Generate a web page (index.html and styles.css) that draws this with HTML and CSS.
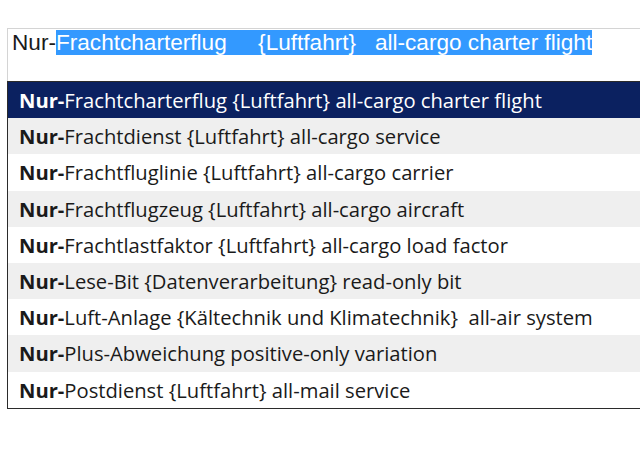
FILE: index.html
```html
<!DOCTYPE html>
<html lang="de">
<head>
<meta charset="utf-8">
<title>Nur-Frachtcharterflug</title>
<link rel="stylesheet" href="styles.css">
</head>
<body>
<div class="page">
  <div class="search"><span class="typed">Nur-</span><span class="sel">Frachtcharterflug     {Luftfahrt}   all-cargo charter flight</span></div>
  <ul class="list">
    <li class="item active"><b>Nur-</b>Frachtcharterflug {Luftfahrt} all-cargo charter flight</li>
    <li class="item alt"><b>Nur-</b>Frachtdienst {Luftfahrt} all-cargo service</li>
    <li class="item"><b>Nur-</b>Frachtfluglinie {Luftfahrt} all-cargo carrier</li>
    <li class="item alt"><b>Nur-</b>Frachtflugzeug {Luftfahrt} all-cargo aircraft</li>
    <li class="item"><b>Nur-</b>Frachtlastfaktor {Luftfahrt} all-cargo load factor</li>
    <li class="item alt"><b>Nur-</b>Lese-Bit {Datenverarbeitung} read-only bit</li>
    <li class="item"><b>Nur-</b>Luft-Anlage {Kältechnik und Klimatechnik}  all-air system</li>
    <li class="item alt"><b>Nur-</b>Plus-Abweichung positive-only variation</li>
    <li class="item"><b>Nur-</b>Postdienst {Luftfahrt} all-mail service</li>
  </ul>
</div>
</body>
</html>
```

FILE: styles.css
```css
html, body {
  margin: 0;
  padding: 0;
  background: #ffffff;
  overflow: hidden;
}
.page {
  width: 640px;
  height: 451px;
  padding-top: 28px;
  padding-left: 7px;
  box-sizing: border-box;
  overflow: hidden;
}
.search {
  height: 53px;
  border-top: 1px solid #d4d4d4;
  border-left: 1px solid #d4d4d4;
  box-sizing: border-box;
  padding: 1px 0 0 4px;
  font-family: "Liberation Sans", Arial, sans-serif;
  font-size: 22.6px;
  line-height: 25px;
  white-space: pre;
  color: #1a1a1a;
}
.sel {
  background: #3399ff;
  color: #ffffff;
}
.list {
  list-style: none;
  margin: 0;
  padding: 0;
  border: 1px solid #2b2b2b;
  border-right: none;
  font-family: "Open Sans", "Noto Sans", sans-serif;
  font-size: 20.2px;
  color: #1a1a1a;
}
.item {
  height: 36.2px;
  line-height: 36px;
  padding-left: 11px;
  white-space: pre;
  background: #ffffff;
}
.item.alt {
  background: #efefef;
}
.item.active {
  background: #0b2160;
  color: #ffffff;
}
.item b {
  font-weight: 700;
}
```
